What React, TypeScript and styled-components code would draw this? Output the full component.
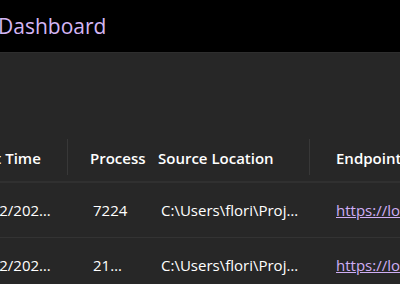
import React from 'react';
import styled, { createGlobalStyle } from 'styled-components';

const GlobalStyle = createGlobalStyle`
  html, body {
    margin: 0;
    padding: 0;
    background: #272727;
    overflow: hidden;
  }
  body {
    font-family: 'Open Sans', 'Noto Sans', sans-serif;
    color: #ffffff;
  }
`;

type Row = {
  time: string;
  process: string;
  source: string;
  endpoint: string;
};

const rows: Row[] = [
  { time: '10/12/202…', process: '7224', source: 'C:\\Users\\flori\\Proj…', endpoint: 'https://lo' },
  { time: '10/12/202…', process: '21…', source: 'C:\\Users\\flori\\Proj…', endpoint: 'https://lo' },
];

/**
 * Cropped view of the resources page of a dashboard
 */
function App() {
  return (
    <Page>
      <GlobalStyle />
      <Header>
        <Title>Dashboard</Title>
      </Header>
      <Main>
        <Table>
          <HeadRow>
            <HeadCell $pad={6} $divider>Start Time</HeadCell>
            <HeadCell $pad={22}>Process</HeadCell>
            <HeadCell $pad={6} $divider>Source Location</HeadCell>
            <HeadCell $pad={26}>Endpoints</HeadCell>
          </HeadRow>
          {rows.map((row, i) => (
            <BodyRow key={i}>
              <Cell $pad={8}>{row.time}</Cell>
              <Cell $pad={25}>{row.process}</Cell>
              <Cell $pad={9}>{row.source}</Cell>
              <Cell $pad={26}>
                <Link href='#'>{row.endpoint}</Link>
              </Cell>
            </BodyRow>
          ))}
        </Table>
      </Main>
    </Page>
  );
}

export default App;

const Page = styled.div`
  display: flex;
  flex-direction: column;
  width: 400px;
  height: 284px;
  overflow: hidden;
  background: #272727;
`;

const Header = styled.header`
  display: flex;
  flex-shrink: 0;
  align-items: center;
  height: 52px;
  background: #000000;
  border-bottom: 1px solid #2e2e2e;
`;

const Title = styled.h1`
  margin: 0 0 0 -2px;
  font-size: 21px;
  font-weight: 400;
  color: #d4b6f5;
  white-space: nowrap;
`;

const Main = styled.main`
  flex-shrink: 0;
  padding-top: 82px;
`;

const Table = styled.div`
  display: flex;
  flex-direction: column;
  margin-left: -40px;
`;

const columns = '108px 84px 158px 1fr';

const HeadRow = styled.div`
  display: grid;
  grid-template-columns: ${columns};
  height: 46px;
  border-bottom: 2px solid #303030;
`;

const HeadCell = styled.div<{ $pad: number; $divider?: boolean }>`
  display: flex;
  align-items: center;
  padding-left: ${(p) => p.$pad}px;
  font-size: 15px;
  font-weight: 600;
  white-space: nowrap;
  overflow: hidden;
  position: relative;

  &::after {
    content: '';
    display: ${(p) => (p.$divider ? 'block' : 'none')};
    position: absolute;
    right: 0;
    top: 4px;
    bottom: 6px;
    width: 1px;
    background: #383838;
  }
`;

const BodyRow = styled.div`
  display: grid;
  grid-template-columns: ${columns};
  height: 54px;
  border-bottom: 1px solid #333333;
`;

const Cell = styled.div<{ $pad: number }>`
  display: flex;
  align-items: center;
  padding-left: ${(p) => p.$pad}px;
  font-size: 15px;
  white-space: nowrap;
  overflow: hidden;
`;

const Link = styled.a`
  color: #cfaef5;
  text-decoration: underline;
`;
